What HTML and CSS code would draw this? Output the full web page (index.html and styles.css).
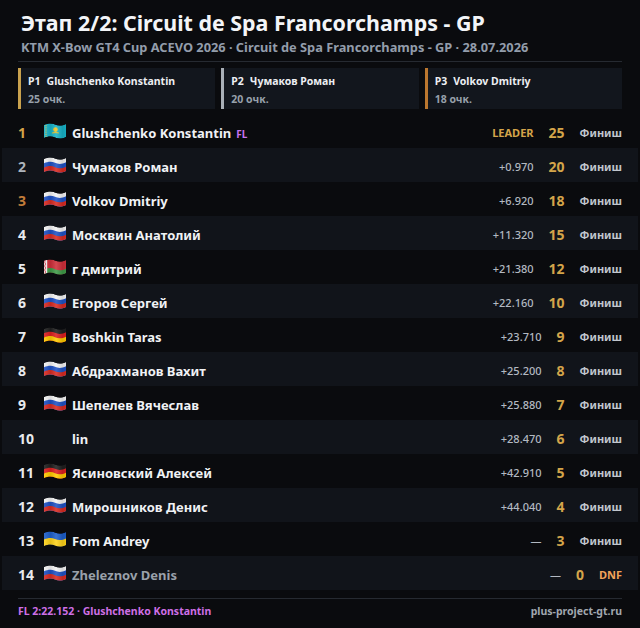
FILE: index.html
```html
<!DOCTYPE html>
<html lang="ru">
<head>
<meta charset="utf-8">
<title>Этап 2/2: Circuit de Spa Francorchamps - GP</title>
<link rel="stylesheet" href="styles.css">
</head>
<body>
<svg class="defs" width="0" height="0" aria-hidden="true">
  <defs>
    <path id="wp" d="M1 3 C5 1 9 1 12 2.5 C15 4 19 4 23 2 L23 15 C19 17 15 17 12 15.5 C9 14 5 14 1 16 Z"/>
    <clipPath id="wave"><use href="#wp"/></clipPath>
    <linearGradient id="shade" x1="0" y1="0" x2="1" y2="0">
      <stop offset="0" stop-color="#fff" stop-opacity="0.10"/>
      <stop offset="0.3" stop-color="#000" stop-opacity="0.10"/>
      <stop offset="0.55" stop-color="#fff" stop-opacity="0.12"/>
      <stop offset="0.85" stop-color="#000" stop-opacity="0.12"/>
      <stop offset="1" stop-color="#000" stop-opacity="0.05"/>
    </linearGradient>
    <symbol id="f-ru" viewBox="0 0 24 18">
      <g clip-path="url(#wave)">
        <use href="#wp" fill="#f4f4f4"/>
        <use href="#wp" y="4.33" fill="#1f52c4"/>
        <use href="#wp" y="8.67" fill="#d92b22"/>
        <use href="#wp" fill="url(#shade)"/>
      </g>
    </symbol>
    <symbol id="f-de" viewBox="0 0 24 18">
      <g clip-path="url(#wave)">
        <use href="#wp" fill="#202020"/>
        <use href="#wp" y="4.33" fill="#dc1f1f"/>
        <use href="#wp" y="8.67" fill="#ffcb00"/>
        <use href="#wp" fill="url(#shade)"/>
      </g>
    </symbol>
    <symbol id="f-ua" viewBox="0 0 24 18">
      <g clip-path="url(#wave)">
        <use href="#wp" fill="#1d5fcb"/>
        <use href="#wp" y="6.5" fill="#ffd31a"/>
        <use href="#wp" fill="url(#shade)"/>
      </g>
    </symbol>
    <symbol id="f-by" viewBox="0 0 24 18">
      <g clip-path="url(#wave)">
        <use href="#wp" fill="#cf2f3a"/>
        <use href="#wp" y="8.67" fill="#3f9b48"/>
        <rect x="0" y="0" width="4.2" height="18" fill="#f2f2f2"/>
        <path d="M2.6 2 L1.6 4 L2.6 6 L1.6 8 L2.6 10 L1.6 12 L2.6 14 L1.6 16" stroke="#cf2f3a" stroke-width="0.9" fill="none"/>
        <use href="#wp" fill="url(#shade)"/>
      </g>
    </symbol>
    <symbol id="f-kz" viewBox="0 0 24 18">
      <g clip-path="url(#wave)">
        <use href="#wp" fill="#17b3c8"/>
        <path d="M3 3 L3 15" stroke="#f1c232" stroke-width="1" stroke-dasharray="1 0.8"/>
        <circle cx="12.5" cy="7.6" r="2.3" fill="#f3c623"/>
        <path d="M9.2 11 Q12.5 9.3 15.8 11 Q12.5 10.4 9.2 11 Z" fill="#f3c623" stroke="#f3c623" stroke-width="0.6"/>
        <use href="#wp" fill="url(#shade)"/>
      </g>
    </symbol>
  </defs>
</svg>

<div class="page">
  <header class="head">
    <h1 class="title">Этап 2/2: Circuit de Spa Francorchamps - GP</h1>
    <div class="sub">KTM X-Bow GT4 Cup ACEVO 2026 · Circuit de Spa Francorchamps - GP · 28.07.2026</div>
  </header>

  <section class="podium">
    <div class="card gold">
      <div class="cname"><span class="cpos">P1</span>Glushchenko Konstantin</div>
      <div class="cpts">25 очк.</div>
    </div>
    <div class="card silver">
      <div class="cname"><span class="cpos">P2</span>Чумаков Роман</div>
      <div class="cpts">20 очк.</div>
    </div>
    <div class="card bronze">
      <div class="cname"><span class="cpos">P3</span>Volkov Dmitriy</div>
      <div class="cpts">18 очк.</div>
    </div>
  </section>

  <section class="table">
    <div class="row">
      <span class="pos p1">1</span>
      <svg class="flag"><use href="#f-kz"/></svg>
      <span class="name">Glushchenko Konstantin<span class="fl">FL</span></span>
      <span class="gap leader">LEADER</span>
      <span class="pts">25</span>
      <span class="status">Финиш</span>
    </div>
    <div class="row">
      <span class="pos p2">2</span>
      <svg class="flag"><use href="#f-ru"/></svg>
      <span class="name">Чумаков Роман</span>
      <span class="gap">+0.970</span>
      <span class="pts">20</span>
      <span class="status">Финиш</span>
    </div>
    <div class="row">
      <span class="pos p3">3</span>
      <svg class="flag"><use href="#f-ru"/></svg>
      <span class="name">Volkov Dmitriy</span>
      <span class="gap">+6.920</span>
      <span class="pts">18</span>
      <span class="status">Финиш</span>
    </div>
    <div class="row">
      <span class="pos">4</span>
      <svg class="flag"><use href="#f-ru"/></svg>
      <span class="name">Москвин Анатолий</span>
      <span class="gap">+11.320</span>
      <span class="pts">15</span>
      <span class="status">Финиш</span>
    </div>
    <div class="row">
      <span class="pos">5</span>
      <svg class="flag"><use href="#f-by"/></svg>
      <span class="name">г дмитрий</span>
      <span class="gap">+21.380</span>
      <span class="pts">12</span>
      <span class="status">Финиш</span>
    </div>
    <div class="row">
      <span class="pos">6</span>
      <svg class="flag"><use href="#f-ru"/></svg>
      <span class="name">Егоров Сергей</span>
      <span class="gap">+22.160</span>
      <span class="pts">10</span>
      <span class="status">Финиш</span>
    </div>
    <div class="row">
      <span class="pos">7</span>
      <svg class="flag"><use href="#f-de"/></svg>
      <span class="name">Boshkin Taras</span>
      <span class="gap">+23.710</span>
      <span class="pts">9</span>
      <span class="status">Финиш</span>
    </div>
    <div class="row">
      <span class="pos">8</span>
      <svg class="flag"><use href="#f-ru"/></svg>
      <span class="name">Абдрахманов Вахит</span>
      <span class="gap">+25.200</span>
      <span class="pts">8</span>
      <span class="status">Финиш</span>
    </div>
    <div class="row">
      <span class="pos">9</span>
      <svg class="flag"><use href="#f-ru"/></svg>
      <span class="name">Шепелев Вячеслав</span>
      <span class="gap">+25.880</span>
      <span class="pts">7</span>
      <span class="status">Финиш</span>
    </div>
    <div class="row">
      <span class="pos">10</span>
      <span class="flag"></span>
      <span class="name">lin</span>
      <span class="gap">+28.470</span>
      <span class="pts">6</span>
      <span class="status">Финиш</span>
    </div>
    <div class="row">
      <span class="pos">11</span>
      <svg class="flag"><use href="#f-de"/></svg>
      <span class="name">Ясиновский Алексей</span>
      <span class="gap">+42.910</span>
      <span class="pts">5</span>
      <span class="status">Финиш</span>
    </div>
    <div class="row">
      <span class="pos">12</span>
      <svg class="flag"><use href="#f-ru"/></svg>
      <span class="name">Мирошников Денис</span>
      <span class="gap">+44.040</span>
      <span class="pts">4</span>
      <span class="status">Финиш</span>
    </div>
    <div class="row">
      <span class="pos">13</span>
      <svg class="flag"><use href="#f-ua"/></svg>
      <span class="name">Fom Andrey</span>
      <span class="gap">—</span>
      <span class="pts">3</span>
      <span class="status">Финиш</span>
    </div>
    <div class="row dnf">
      <span class="pos">14</span>
      <svg class="flag"><use href="#f-ru"/></svg>
      <span class="name">Zheleznov Denis</span>
      <span class="gap">—</span>
      <span class="pts">0</span>
      <span class="status">DNF</span>
    </div>
  </section>

  <footer class="foot">
    <span class="flap">FL 2:22.152 · Glushchenko Konstantin</span>
    <span class="site">plus-project-gt.ru</span>
  </footer>
</div>
</body>
</html>
```

FILE: styles.css
```css
html, body {
  margin: 0;
  padding: 0;
  background: #0a0b0e;
  overflow: hidden;
}

body {
  font-family: "Noto Sans", "Open Sans", "DejaVu Sans", sans-serif;
  color: #eef0f3;
}

.defs {
  position: absolute;
  width: 0;
  height: 0;
  overflow: hidden;
}

.page {
  padding: 10px 18px 0;
}

.head {
  padding-bottom: 6.5px;
  border-bottom: 1px solid #262a31;
}

.title {
  margin: 0;
  padding-left: 3px;
  font-size: 21.4px;
  line-height: 26px;
  font-weight: 700;
  color: #f3f5f8;
}

.sub {
  margin-top: 2.5px;
  padding-left: 3px;
  font-size: 12.8px;
  line-height: 16px;
  font-weight: 700;
  color: #939dab;
}

.podium {
  display: grid;
  grid-template-columns: repeat(3, 1fr);
  gap: 6px;
  margin-top: 6px;
}

.card {
  background: #12161d;
  border-left: 3px solid #c9a24e;
  padding: 6px 8px 3px 7px;
}

.card.silver { border-left-color: #a9b0b8; }
.card.bronze { border-left-color: #bb772f; }

.cname {
  font-size: 10.5px;
  line-height: 14px;
  font-weight: 700;
  color: #eceef2;
  white-space: nowrap;
}

.cpos {
  margin-right: 6px;
}

.cpts {
  margin-top: 4px;
  font-size: 10.5px;
  line-height: 14px;
  font-weight: 700;
  color: #97a0ab;
}

.table {
  margin: 5px -16px 0;
}

.row {
  display: flex;
  align-items: center;
  box-sizing: border-box;
  height: 34px;
  padding: 3px 16px 0;
}

.row:nth-child(even) {
  background: #11141a;
}

.pos {
  width: 25px;
  font-size: 14px;
  font-weight: 700;
  color: #e8eaed;
}

.pos.p1 { color: #d4a54a; }
.pos.p2 { color: #aeb5bd; }
.pos.p3 { color: #c27d3a; }

.flag {
  display: block;
  width: 24px;
  height: 18px;
  margin: -3px 5px 0 0;
  flex: none;
}

.name {
  flex: 1;
  font-size: 13px;
  font-weight: 700;
  color: #f0f2f5;
  white-space: nowrap;
}

.dnf .name {
  color: #9aa1aa;
}

.fl {
  margin-left: 5px;
  font-size: 10px;
  font-weight: 700;
  color: #c874f0;
}

.gap {
  font-size: 11px;
  font-weight: 500;
  color: #b3b9c1;
}

.gap.leader {
  font-weight: 700;
  color: #d4a54a;
}

.pts {
  margin-left: 15px;
  font-size: 14px;
  font-weight: 700;
  color: #d4a54a;
}

.status {
  margin-left: 15px;
  font-size: 11px;
  font-weight: 700;
  color: #c1c6cd;
}

.dnf .status {
  color: #f2a35a;
}

.foot {
  display: flex;
  justify-content: space-between;
  margin-top: 8px;
  padding-top: 5px;
  border-top: 1px solid #262a31;
  font-size: 10.5px;
  line-height: 14px;
  font-weight: 700;
}

.flap {
  color: #cf6fe6;
}

.site {
  color: #a1a7af;
}
```
